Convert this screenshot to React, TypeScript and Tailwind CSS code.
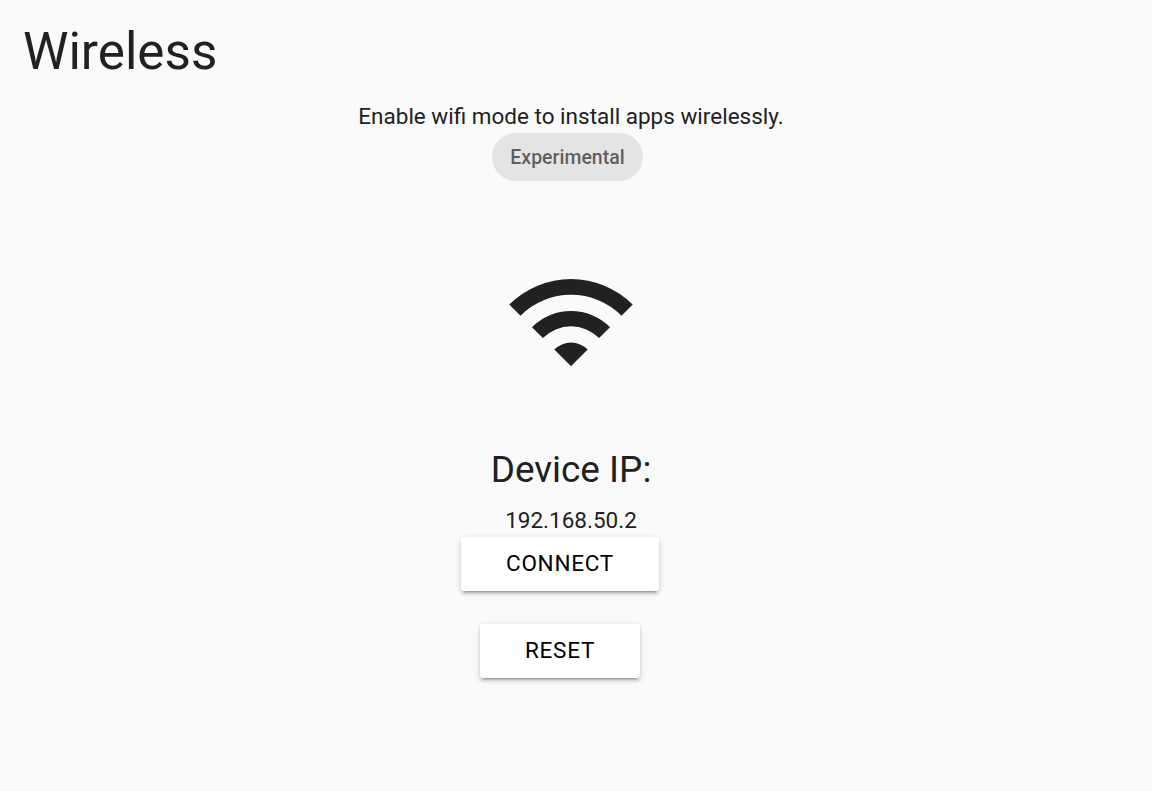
interface MaterialButtonProps {
  label: string;
  className: string;
}

function MaterialButton({ label, className }: MaterialButtonProps) {
  return (
    <button
      className={`h-[54px] rounded-[3px] bg-white text-black text-[22.5px] leading-[52px] pb-[2px] tracking-[0.75px] whitespace-nowrap shadow-[0_3px_3px_0_rgba(0,0,0,0.14),0_4.5px_1.5px_-3px_rgba(0,0,0,0.2),0_1.5px_7.5px_0_rgba(0,0,0,0.12)] ${className}`}
    >
      {label}
    </button>
  );
}

function WifiIcon() {
  return (
    <svg viewBox="0 0 124 88" className="w-[124px] h-[88px]" fill="#212121">
      <path d="M.3 26.6 A87.2 87.2 0 0 1 123.7 26.6 L112.5 37.8 A71 71 0 0 0 11.5 37.8 Z" />
      <path d="M23 49.2 A55.1 55.1 0 0 1 101 49.2 L90.1 60.1 A39.5 39.5 0 0 0 33.9 60.1 Z" />
      <path d="M45.3 71.5 A23.6 23.6 0 0 1 78.7 71.5 L62 88.2 Z" />
    </svg>
  );
}

export default function App() {
  return (
    <main className="min-h-screen bg-[#fafafa] text-[#212121] font-['Roboto',sans-serif]">
      <h1 className="pl-[23px] pt-[21px] text-[51.2px] leading-[62px]">Wireless</h1>
      <section className="flex flex-col items-center pr-[10px]">
        <p className="mt-[17px] text-[22.5px] leading-[33px]">Enable wifi mode to install apps wirelessly.</p>
        <span className="mr-[7px] flex h-[48px] w-[151px] items-center justify-center rounded-full bg-[#e4e4e4] pt-[2px] text-[19.5px] font-medium text-black/60">
          Experimental
        </span>
        <div className="mt-[97px]">
          <WifiIcon />
        </div>
        <h2 className="mt-[79px] text-[36.9px] leading-[50px]">Device IP:</h2>
        <p className="mt-[9px] text-[22.5px] leading-[33px]">192.168.50.2</p>
        <MaterialButton label="CONNECT" className="mr-[22px] w-[198px]" />
        <MaterialButton label="RESET" className="mt-[33px] mr-[22px] w-[160px]" />
      </section>
    </main>
  );
}
